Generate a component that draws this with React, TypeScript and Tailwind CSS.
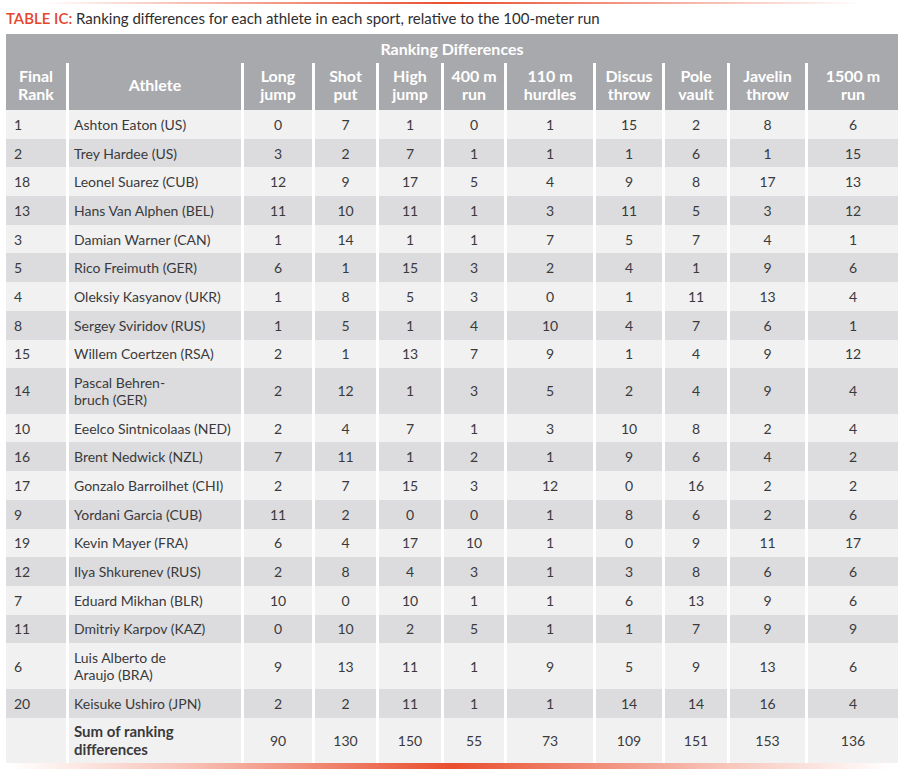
const columns = [
  { label: ["Final", "Rank"], w: "w-[60px]" },
  { label: ["Athlete"], w: "w-[175px]" },
  { label: ["Long", "jump"], w: "w-[71px]" },
  { label: ["Shot", "put"], w: "w-[64px]" },
  { label: ["High", "jump"], w: "w-[65px]" },
  { label: ["400 m", "run"], w: "w-[63px]" },
  { label: ["110 m", "hurdles"], w: "w-[89px]" },
  { label: ["Discus", "throw"], w: "w-[69px]" },
  { label: ["Pole", "vault"], w: "w-[65px]" },
  { label: ["Javelin", "throw"], w: "w-[78px]" },
  { label: ["1500 m", "run"], w: "w-[93px]" },
]

type Row = { rank: string; name: string[]; vals: number[]; bold?: boolean }

const rows: Row[] = [
  { rank: "1", name: ["Ashton Eaton (US)"], vals: [0, 7, 1, 0, 1, 15, 2, 8, 6] },
  { rank: "2", name: ["Trey Hardee (US)"], vals: [3, 2, 7, 1, 1, 1, 6, 1, 15] },
  { rank: "18", name: ["Leonel Suarez (CUB)"], vals: [12, 9, 17, 5, 4, 9, 8, 17, 13] },
  { rank: "13", name: ["Hans Van Alphen (BEL)"], vals: [11, 10, 11, 1, 3, 11, 5, 3, 12] },
  { rank: "3", name: ["Damian Warner (CAN)"], vals: [1, 14, 1, 1, 7, 5, 7, 4, 1] },
  { rank: "5", name: ["Rico Freimuth (GER)"], vals: [6, 1, 15, 3, 2, 4, 1, 9, 6] },
  { rank: "4", name: ["Oleksiy Kasyanov (UKR)"], vals: [1, 8, 5, 3, 0, 1, 11, 13, 4] },
  { rank: "8", name: ["Sergey Sviridov (RUS)"], vals: [1, 5, 1, 4, 10, 4, 7, 6, 1] },
  { rank: "15", name: ["Willem Coertzen (RSA)"], vals: [2, 1, 13, 7, 9, 1, 4, 9, 12] },
  { rank: "14", name: ["Pascal Behren-", "bruch (GER)"], vals: [2, 12, 1, 3, 5, 2, 4, 9, 4] },
  { rank: "10", name: ["Eeelco Sintnicolaas (NED)"], vals: [2, 4, 7, 1, 3, 10, 8, 2, 4] },
  { rank: "16", name: ["Brent Nedwick (NZL)"], vals: [7, 11, 1, 2, 1, 9, 6, 4, 2] },
  { rank: "17", name: ["Gonzalo Barroilhet (CHI)"], vals: [2, 7, 15, 3, 12, 0, 16, 2, 2] },
  { rank: "9", name: ["Yordani Garcia (CUB)"], vals: [11, 2, 0, 0, 1, 8, 6, 2, 6] },
  { rank: "19", name: ["Kevin Mayer (FRA)"], vals: [6, 4, 17, 10, 1, 0, 9, 11, 17] },
  { rank: "12", name: ["Ilya Shkurenev (RUS)"], vals: [2, 8, 4, 3, 1, 3, 8, 6, 6] },
  { rank: "7", name: ["Eduard Mikhan (BLR)"], vals: [10, 0, 10, 1, 1, 6, 13, 9, 6] },
  { rank: "11", name: ["Dmitriy Karpov (KAZ)"], vals: [0, 10, 2, 5, 1, 1, 7, 9, 9] },
  { rank: "6", name: ["Luis Alberto de", "Araujo (BRA)"], vals: [9, 13, 11, 1, 9, 5, 9, 13, 6] },
  { rank: "20", name: ["Keisuke Ushiro (JPN)"], vals: [2, 2, 11, 1, 1, 14, 14, 16, 4] },
  { rank: "", name: ["Sum of ranking", "differences"], vals: [90, 130, 150, 55, 73, 109, 151, 153, 136], bold: true },
]

export default function App() {
  return (
    <div className="w-[902px] h-[772px] bg-white font-['Lato',sans-serif] text-[#3a3a3c] overflow-hidden">
      <div className="mx-[40px] mt-[2px] h-[2px] bg-[linear-gradient(to_right,rgba(233,78,46,0),#e94e2e_50%,rgba(233,78,46,0))]" />
      <div className="pl-[6px] mt-[4px] h-[26px] text-[15px] leading-[20px]">
        <span className="text-[#e5452b] font-semibold">TABLE IC:</span>{" "}
        <span className="text-[#2e2e30]">Ranking differences for each athlete in each sport, relative to the 100-meter run</span>
      </div>

      <div className="mx-[6px] w-[892px]">
        <div className="bg-[#a8a9ac] text-white font-bold text-[16px] leading-[18px]">
          <div className="h-[29px] flex items-center justify-center pt-[1px]">Ranking Differences</div>
          <div className="flex h-[47px]">
            {columns.map((c, i) => (
              <div
                key={i}
                className={`${c.w} flex flex-col items-center justify-center pb-[4px] ${i > 0 ? "border-l-[3px] border-white" : ""}`}
              >
                {c.label.map((l) => (
                  <span key={l}>{l}</span>
                ))}
              </div>
            ))}
          </div>
        </div>

        {rows.map((r, ri) => {
          const tall = r.name.length > 1
          const bg = ri % 2 === 0 ? "bg-[#f1f1f2]" : "bg-[#dcdcde]"
          return (
            <div key={ri} className={`flex ${bg} ${tall ? "h-[45.6px]" : "h-[28.7px]"} text-[14px] leading-[17px]`}>
              <div className="w-[60px] flex items-center pl-[8px]">{r.rank}</div>
              <div
                className={`w-[175px] border-l-[3px] border-white flex flex-col justify-center pl-[5px] ${r.bold ? "font-bold text-[15px] leading-[18px]" : ""}`}
              >
                {r.name.map((n) => (
                  <span key={n}>{n}</span>
                ))}
              </div>
              {r.vals.map((v, vi) => (
                <div
                  key={vi}
                  className={`${columns[vi + 2].w} border-l-[3px] border-white flex items-center justify-center`}
                >
                  {v}
                </div>
              ))}
            </div>
          )
        })}
      </div>
      <div className="mx-[10px] h-[6px] bg-[linear-gradient(to_right,rgba(233,78,46,0),rgba(233,78,46,0.35)_20%,#e94e2e_50%,rgba(233,78,46,0.35)_80%,rgba(233,78,46,0))]" />
    </div>
  )
}
